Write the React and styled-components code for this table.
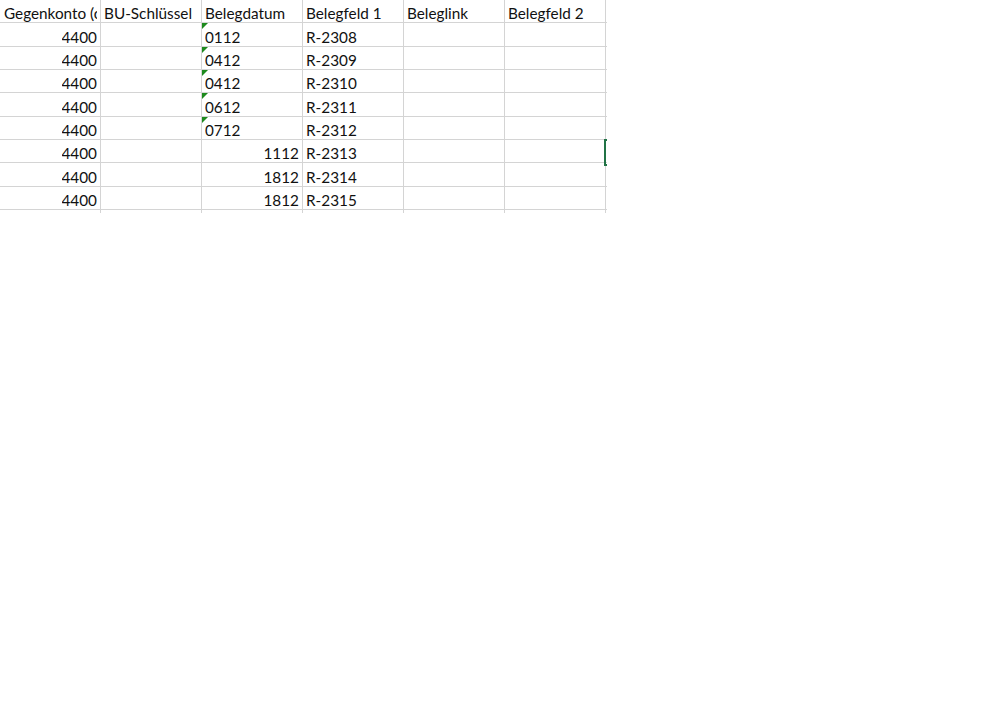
import styled, { createGlobalStyle } from 'styled-components';

const GlobalStyle = createGlobalStyle`
    html, body {
        margin: 0;
        padding: 0;
        background: #ffffff;
    }
    body {
        font-family: Lato, "Open Sans", "Liberation Sans", sans-serif;
        color: #000000;
    }
`;

const headers = ['Gegenkonto (ohne BU-Schlüssel)', 'BU-Schlüssel', 'Belegdatum', 'Belegfeld 1', 'Beleglink', 'Belegfeld 2', ''];

const rows = [
    { konto: '4400', datum: '0112', text: true, feld: 'R-2308' },
    { konto: '4400', datum: '0412', text: true, feld: 'R-2309' },
    { konto: '4400', datum: '0412', text: true, feld: 'R-2310' },
    { konto: '4400', datum: '0612', text: true, feld: 'R-2311' },
    { konto: '4400', datum: '0712', text: true, feld: 'R-2312' },
    { konto: '4400', datum: '1112', text: false, feld: 'R-2313', selected: true },
    { konto: '4400', datum: '1812', text: false, feld: 'R-2314' },
    { konto: '4400', datum: '1812', text: false, feld: 'R-2315' },
];

const Sheet = styled.div`
    width: 607px;
    height: 213px;
    overflow: hidden;
`;

const Grid = styled.div`
    display: grid;
    grid-template-columns: repeat(7, 101px);
    grid-auto-rows: 23.34px;
    font-size: 15.3px;
    color: #111;
`;

const Cell = styled.div`
    position: relative;
    box-sizing: border-box;
    border-right: 1px solid #d4d4d4;
    border-bottom: 1px solid #d4d4d4;
    padding: 0 3px 0;
    display: flex;
    align-items: flex-end;
    justify-content: ${(p) => (p.$right ? 'flex-end' : 'flex-start')};
    line-height: 18px;
`;

const HeadCell = styled(Cell)`
    padding-left: ${(p) => (p.$first ? '4px' : '3px')};
    padding-bottom: 0;
`;

const Text = styled.span`
    display: block;
    min-width: 0;
    overflow: hidden;
    white-space: nowrap;
    text-overflow: clip;
`;

const ErrorMark = styled.span`
    position: absolute;
    left: 0;
    top: 0;
    width: 0;
    height: 0;
    border-top: 6px solid #1d8a1d;
    border-right: 6px solid transparent;
`;

const Selection = styled.span`
    position: absolute;
    z-index: 2;
    left: -2px;
    top: -1px;
    width: 101px;
    height: 23px;
    border: 2px solid #217346;
`;

export default function App() {
    return (
        <Sheet>
            <GlobalStyle />
            <Grid>
                {headers.map((h, i) => (
                    <HeadCell key={i} $first={i === 0}>
                        {h && <Text>{h}</Text>}
                    </HeadCell>
                ))}
                {rows.map((r, i) => (
                    <>
                        <Cell key={'a' + i} $right><Text>{r.konto}</Text></Cell>
                        <Cell key={'b' + i} />
                        <Cell key={'c' + i} $right={!r.text}>
                            {r.text && <ErrorMark />}
                            <Text>{r.datum}</Text>
                        </Cell>
                        <Cell key={'d' + i}><Text>{r.feld}</Text></Cell>
                        <Cell key={'e' + i} />
                        <Cell key={'f' + i} />
                        <Cell key={'g' + i}>{r.selected && <Selection />}</Cell>
                    </>
                ))}
                {headers.map((h, i) => (
                    <Cell key={'z' + i} />
                ))}
            </Grid>
        </Sheet>
    );
}
